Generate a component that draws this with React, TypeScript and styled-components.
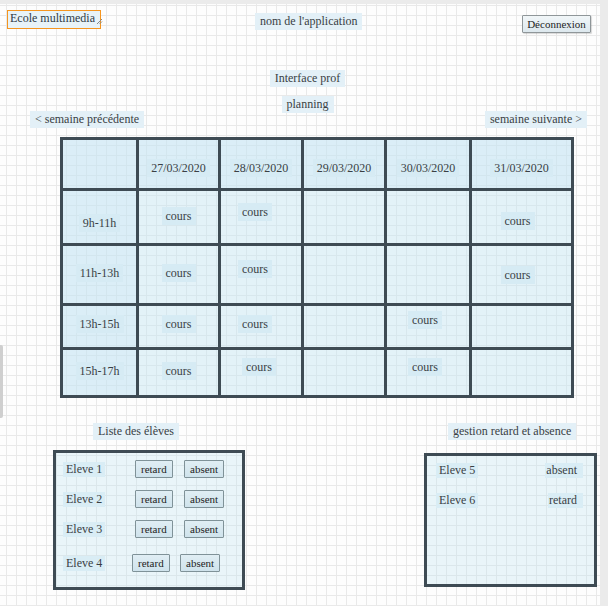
import styled, { createGlobalStyle } from 'styled-components'

const GlobalStyle = createGlobalStyle`
  html, body {
    margin: 0;
    padding: 0;
    background: #ebebeb;
  }
  body {
    font-family: 'Liberation Serif', 'Times New Roman', serif;
    color: #3a3f44;
  }
`

const dates = ['27/03/2020', '28/03/2020', '29/03/2020', '30/03/2020', '31/03/2020']

type Slot = { dy?: number; dx?: number } | null

const rows: { hour: string; dy: number; height: number; cells: Slot[] }[] = [
  { hour: '9h-11h', dy: 5, height: 55, cells: [{ dy: -2 }, { dy: -6, dx: -6 }, null, null, { dy: 3, dx: -4 }] },
  { hour: '11h-13h', dy: -2, height: 60, cells: [{ dy: -2 }, { dy: -6, dx: -6 }, null, null, { dy: 0, dx: -4 }] },
  { hour: '13h-15h', dy: -3, height: 44, cells: [{ dy: -3 }, { dy: -3, dx: -6 }, null, { dy: -7, dx: -3 }, null] },
  { hour: '15h-17h', dy: -2, height: 48, cells: [{ dy: -2 }, { dy: -6, dx: -2 }, null, { dy: -6, dx: -3 }, null] },
]

const students = [
  { name: 'Eleve 1', tight: false },
  { name: 'Eleve 2', tight: false },
  { name: 'Eleve 3', tight: false },
  { name: 'Eleve 4', tight: true },
]

const App = () => {
  return (
    <>
      <GlobalStyle />
      <Canvas>
        <SideHandle />
        <Header>
          <Logo>
            Ecole multimedia
            <svg width="7" height="7" viewBox="0 0 7 7">
              <path d="M6 1 L1 6 M6 3.5 L3.5 6" stroke="#888" strokeWidth="1" />
            </svg>
          </Logo>
          <Label $top={3}>nom de l&apos;application</Label>
          <LogoutButton>Déconnexion</LogoutButton>
        </Header>

        <Titles>
          <Label>Interface prof</Label>
          <Label>planning</Label>
        </Titles>

        <WeekNav>
          <Label>&lt; semaine précédente</Label>
          <Label>semaine suivante &gt;</Label>
        </WeekNav>

        <Planning>
          <colgroup>
            <col style={{ width: 76 }} />
            <col style={{ width: 82 }} />
            <col style={{ width: 83 }} />
            <col style={{ width: 83 }} />
            <col style={{ width: 85 }} />
            <col style={{ width: 102 }} />
          </colgroup>
          <thead>
            <tr>
              <HeadCell />
              {dates.map((d) => (
                <HeadCell key={d}>
                  <CellTag $dy={3}>{d}</CellTag>
                </HeadCell>
              ))}
            </tr>
          </thead>
          <tbody>
            {rows.map((r) => (
              <PlanRow key={r.hour} $height={r.height}>
                <HourCell>
                  <CellTag $dy={r.dy}>{r.hour}</CellTag>
                </HourCell>
                {r.cells.map((c, i) => (
                  <Cell key={i}>
                    {c && (
                      <CellTag $dy={c.dy} $dx={c.dx}>
                        cours
                      </CellTag>
                    )}
                  </Cell>
                ))}
              </PlanRow>
            ))}
          </tbody>
        </Planning>

        <Bottom>
          <Column $width={192}>
            <Label $left={40}>Liste des élèves</Label>
            <Panel $top={10} $height={140}>
              <StudentList>
                {students.map((s) => (
                  <StudentRow key={s.name} $tight={s.tight}>
                    <NameTag>{s.name}</NameTag>
                    <SmallButton>retard</SmallButton>
                    <SmallButton>absent</SmallButton>
                  </StudentRow>
                ))}
              </StudentList>
            </Panel>
          </Column>

          <Column $width={173} $left={179}>
            <Label $left={24}>gestion retard et absence</Label>
            <Panel $top={13} $height={134}>
              <AbsenceList>
                <AbsenceRow>
                  <NameTag>Eleve 5</NameTag>
                  <StatusTag>absent</StatusTag>
                </AbsenceRow>
                <AbsenceRow>
                  <NameTag>Eleve 6</NameTag>
                  <StatusTag>retard</StatusTag>
                </AbsenceRow>
              </AbsenceList>
            </Panel>
          </Column>
        </Bottom>
      </Canvas>
    </>
  )
}

export default App

const Canvas = styled.div`
  position: relative;
  width: 600px;
  height: 602px;
  margin-top: 4px;
  background-color: #fdfdfd;
  background-image:
    linear-gradient(to right, #e9e9e9 1px, transparent 1px),
    linear-gradient(to bottom, #e9e9e9 1px, transparent 1px);
  background-size: 10px 10px;
  background-position: 6px 1px;
  overflow: hidden;
`

const SideHandle = styled.div`
  position: absolute;
  left: 0;
  top: 341px;
  width: 3px;
  height: 73px;
  background: #cfcfcf;
  border-radius: 0 2px 2px 0;
`

const Header = styled.header`
  display: grid;
  grid-template-columns: 248px 267px auto;
  align-items: start;
  justify-items: start;
  padding: 6px 0 0 7px;
  height: 28px;
  box-sizing: border-box;
`

const Logo = styled.div`
  display: flex;
  align-items: flex-end;
  width: 94px;
  height: 19px;
  box-sizing: border-box;
  padding: 0 0 3px 2px;
  border: 1px solid #f5951f;
  background: #e8f3f8;
  font-size: 12px;
  line-height: 13px;
  white-space: nowrap;
  color: #2f3a44;

  svg {
    margin-left: 1px;
    flex-shrink: 0;
  }
`

const Label = styled.div<{ $top?: number; $left?: number }>`
  display: inline-block;
  align-self: flex-start;
  margin-top: ${(p) => p.$top ?? 0}px;
  margin-left: ${(p) => p.$left ?? 0}px;
  padding: 2px 5px;
  background: #e3f0f7;
  font-size: 12px;
  line-height: 13px;
  white-space: nowrap;
`

const LogoutButton = styled.button`
  margin-top: 5px;
  width: 69px;
  height: 18px;
  padding: 0;
  border: 1px solid #8f9699;
  border-radius: 1px;
  background: linear-gradient(#f1f6f8, #dde8ee);
  box-shadow: 1px 1px 1px rgba(0, 0, 0, 0.15);
  font-family: 'Liberation Serif', 'Times New Roman', serif;
  font-size: 11px;
  color: #1e1e1e;
`

const Titles = styled.div`
  display: flex;
  flex-direction: column;
  align-items: center;
  gap: 9px;
  margin-top: 38px;
  padding-left: 15px;

  > div {
    align-self: center;
  }
`

const WeekNav = styled.div`
  display: flex;
  justify-content: space-between;
  margin-top: -2px;
  padding: 0 13px 0 30px;
`

const Planning = styled.table`
  margin: 9px 0 0 60px;
  width: 512px;
  table-layout: fixed;
  border-collapse: collapse;
  border: 3px solid #3e4b54;
  background: rgba(196, 228, 242, 0.45);
`

const PlanRow = styled.tr<{ $height: number }>`
  height: ${(p) => p.$height}px;
`

const Cell = styled.td`
  padding: 0;
  border: 3px solid #3e4b54;
  text-align: center;
  vertical-align: middle;
`

const HeadCell = styled(Cell).attrs({ as: 'th' })`
  height: 48px;
  font-weight: normal;
  background: rgba(196, 228, 242, 0.25);
`

const HourCell = styled(Cell)`
  background: rgba(196, 228, 242, 0.25);
`

const CellTag = styled.span<{ $dy?: number; $dx?: number }>`
  display: inline-block;
  position: relative;
  top: ${(p) => p.$dy ?? 0}px;
  left: ${(p) => p.$dx ?? 0}px;
  padding: 3px 4px;
  background: #d6ebf4;
  font-size: 12px;
  line-height: 12px;
  color: #3a3f44;
`

const Bottom = styled.div`
  display: flex;
  align-items: flex-start;
  margin-top: 25px;
  padding-left: 53px;
`

const Column = styled.div<{ $width: number; $left?: number }>`
  display: flex;
  flex-direction: column;
  width: ${(p) => p.$width}px;
  margin-left: ${(p) => p.$left ?? 0}px;
`

const Panel = styled.div<{ $top: number; $height: number }>`
  margin-top: ${(p) => p.$top}px;
  height: ${(p) => p.$height}px;
  box-sizing: border-box;
  border: 3px solid #3e4b54;
  background: rgba(196, 228, 242, 0.35);
`

const StudentList = styled.div`
  display: flex;
  flex-direction: column;
  padding: 7px 0 0 7px;
`

const StudentRow = styled.div<{ $tight: boolean }>`
  display: grid;
  grid-template-columns: ${(p) => (p.$tight ? '69px 48px auto' : '72px 49px auto')};
  align-items: center;
  height: 18px;
  margin-bottom: 12px;

  &:nth-child(3) {
    margin-bottom: 16px;
  }
`

const NameTag = styled.span`
  justify-self: start;
  padding: 1px 3px;
  background: #d9edf5;
  font-size: 12px;
  line-height: 13px;
`

const SmallButton = styled.button`
  justify-self: start;
  height: 18px;
  padding: 0 5px;
  border: 1px solid #7f9298;
  border-radius: 1px;
  background: linear-gradient(#e0eef4, #cfe3ec);
  font-family: 'Liberation Serif', 'Times New Roman', serif;
  font-size: 11px;
  line-height: 14px;
  color: #1e1e1e;
`

const AbsenceList = styled.div`
  display: flex;
  flex-direction: column;
  gap: 15px;
  padding: 7px 11px 0 9px;
`

const AbsenceRow = styled.div`
  display: flex;
  justify-content: space-between;
  align-items: center;
`

const StatusTag = styled(NameTag)`
  padding: 1px 6px 1px 1px;
`
